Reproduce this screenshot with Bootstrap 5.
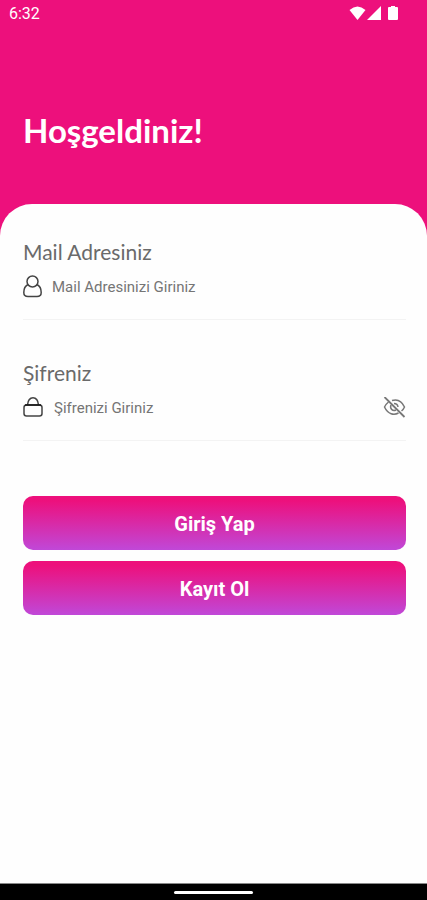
<!DOCTYPE html>
<html lang="tr">
<head>
<meta charset="utf-8">
<meta name="viewport" content="width=device-width, initial-scale=1">
<title>Hoşgeldiniz</title>
<link href="https://cdn.jsdelivr.net/npm/bootstrap@5.3.0/dist/css/bootstrap.min.css" rel="stylesheet">
<style>
  body { font-family: Roboto, "Liberation Sans", sans-serif; background: #ed107c; }
  .status-bar { height: 28px; padding: 0 28px 0 9px; font-size: 16px; line-height: 28px; }
  .welcome { height: 176px; padding: 82px 23px 0; }
  .welcome-title { font-family: Lato, sans-serif; font-weight: 700; font-size: 33px; line-height: 40px; }
  .sheet { background: #fefefe; border-radius: 32px 32px 0 0; padding: 35px 21px 24px 23px; }
  .field { height: 81px; border-bottom: 1px solid #f3f3f3; }
  .field-label { font-family: Lato, sans-serif; font-size: 21px; line-height: 26px; color: #6a6a6a; }
  .field-row { height: 44px; gap: 10px; }
  .field-input { font-size: 15px; line-height: 24px; color: #555; }
  .field-input::placeholder { color: #757575; opacity: 1; }
  .field-input:focus { background: transparent; box-shadow: none; }
  .second-field { margin-top: 40px; }
  .actions { margin-top: 55px; gap: 11px; }
  .btn-gradient { height: 54px; border-radius: 10px; color: #fff; font-size: 20px; line-height: 56px; font-weight: 700; background: linear-gradient(#ed107c 8%, #c048d8); }
  .btn-gradient:hover { color: #fff; }
  .nav-strip { height: 17px; background: #000; border-top: 1px solid #888; }
  .nav-handle { width: 79px; height: 3px; background: #fff; }
</style>
<script src="https://cdn.jsdelivr.net/npm/bootstrap@5.3.0/dist/js/bootstrap.bundle.min.js" defer></script>
</head>
<body class="d-flex flex-column min-vh-100">
  <header class="text-white">
    <div class="status-bar d-flex justify-content-between align-items-center">
      <span>6:32</span>
      <svg width="50" height="16" viewBox="0 0 50 16" fill="#fff" aria-hidden="true">
        <path d="M.5 4Q8.500-3 16.500 4L8.500 14Z"/>
        <path d="M32 0v14H18Z"/>
        <path d="M40 1h2V0h4v1h2q1 0 1 1v11q0 1-1 1h-8q-1 0-1-1V2q0-1 1-1Z"/>
      </svg>
    </div>
    <div class="welcome"><h1 class="welcome-title m-0">Hoşgeldiniz!</h1></div>
  </header>
  <main class="sheet flex-grow-1">
    <form>
      <div class="field">
        <label class="field-label d-block" for="mail">Mail Adresiniz</label>
        <div class="field-row d-flex align-items-center">
          <svg class="flex-shrink-0" width="19" height="24" viewBox="0 0 19 24" fill="none" stroke="#444" stroke-width="1.500" aria-hidden="true">
            <circle cx="9.500" cy="6.500" r="5.500"/>
            <path d="M5 9.500C2 11 .8 14 .8 17.500Q.8 21.500 5 21.500H14Q18.200 21.500 18.200 17.500C18.200 14 17 11 14 9.500"/>
          </svg>
          <input class="field-input form-control border-0 bg-transparent p-0" type="email" id="mail" placeholder="Mail Adresinizi Giriniz">
        </div>
      </div>
      <div class="field second-field">
        <label class="field-label d-block" for="password">Şifreniz</label>
        <div class="field-row d-flex align-items-center">
          <svg class="flex-shrink-0" width="21" height="22" viewBox="0 0 21 22" fill="none" stroke="#444" stroke-width="1.500" aria-hidden="true">
            <rect x="1" y="8" width="18" height="11" rx="2.500"/>
            <path d="M4.500 8C5 3 7 .8 10 .8S15 3 15.500 8"/>
            <path d="M2 8H18" stroke="#111"/>
          </svg>
          <input class="field-input form-control border-0 bg-transparent p-0" type="password" id="password" placeholder="Şifrenizi Giriniz">
          <button class="btn border-0 p-0 d-flex flex-shrink-0" type="button" aria-label="Şifreyi göster">
            <svg width="23" height="22" viewBox="0 0 23 22" fill="none" stroke="#777" stroke-width="1.500" aria-hidden="true">
              <path d="M9 3.500C14.500 1.800 19 4.500 21.500 10Q20.500 12.300 18.500 14M5.500 5Q3 7 1.500 10C5 17.500 11 18.500 15.500 16"/>
              <path d="M8 8C6.500 11.500 9.500 14.500 13 13M11 6.500Q14.500 6.500 15 10"/>
              <path d="M1.500 0L21.500 20" stroke-width="1.800"/>
            </svg>
          </button>
        </div>
      </div>
      <div class="actions d-grid">
        <button class="btn btn-gradient border-0 py-0" type="submit">Giriş Yap</button>
        <button class="btn btn-gradient border-0 py-0" type="button">Kayıt Ol</button>
      </div>
    </form>
  </main>
  <footer class="nav-strip d-flex justify-content-center align-items-center">
    <div class="nav-handle rounded-pill"></div>
  </footer>
</body>
</html>
